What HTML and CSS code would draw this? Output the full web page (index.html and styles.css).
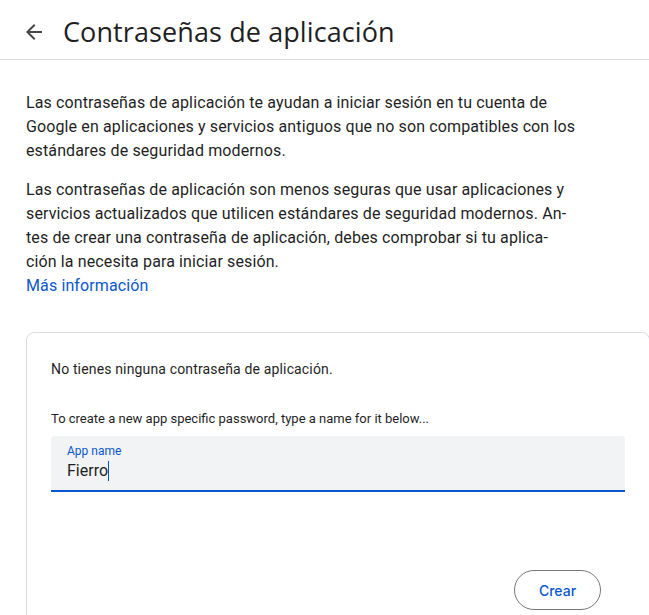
FILE: index.html
```html
<!DOCTYPE html>
<html lang="es">
<head>
<meta charset="utf-8">
<title>Contraseñas de aplicación</title>
<link rel="stylesheet" href="styles.css">
</head>
<body>
<header class="topbar">
  <span class="back" aria-label="Atrás">
    <svg viewBox="0 0 24 24" width="24" height="24"><path d="M20 11H7.83l5.59-5.59L12 4l-8 8 8 8 1.41-1.41L7.83 13H20v-2z" fill="#444746"/></svg>
  </span>
  <h1 class="title">Contraseñas de aplicación</h1>
</header>
<main class="content">
  <p class="para">Las contraseñas de aplicación te ayudan a iniciar sesión en tu cuenta de Google en aplicaciones y servicios antiguos que no son compatibles con los estándares de seguridad modernos.</p>
  <p class="para second">Las contraseñas de aplicación son menos seguras que usar aplicaciones y servicios actualizados que utilicen estándares de seguridad modernos. An&shy;tes de crear una contraseña de aplicación, debes comprobar si tu aplica&shy;ción la necesita para iniciar sesión.<br><a class="link" href="#">Más información</a></p>
</main>
<section class="card">
  <p class="empty">No tienes ninguna contraseña de aplicación.</p>
  <p class="hint">To create a new app specific password, type a name for it below...</p>
  <div class="field">
    <span class="label">App name</span>
    <span class="value">Fierro<span class="caret"></span></span>
  </div>
  <div class="actions">
    <button class="btn">Crear</button>
  </div>
</section>
</body>
</html>
```
FILE: styles.css
```css
html, body {
  margin: 0;
  padding: 0;
  background: #fff;
}
body {
  font-family: Roboto, "Liberation Sans", sans-serif;
  color: #1f1f1f;
  overflow: hidden;
}
.topbar {
  display: flex;
  align-items: center;
  height: 59px;
  border-bottom: 1px solid #dadce0;
  padding-left: 22px;
  gap: 17px;
}
.back {
  display: flex;
  width: 24px;
  height: 24px;
  margin-top: 4px;
}
.title {
  margin: 0;
  font-family: "Open Sans", sans-serif;
  font-weight: 400;
  font-size: 27px;
  color: #1f1f1f;
  letter-spacing: 0.1px;
  margin-top: 4px;
}
.content {
  padding: 31px 26px 0 26px;
  width: 554px;
}
.para {
  margin: 0;
  font-size: 16px;
  line-height: 24px;
  letter-spacing: 0.12px;
  color: #1f1f1f;
}
.second {
  margin-top: 15px;
  max-width: 546px;
}
.link {
  color: #0b57d0;
  text-decoration: none;
}
.card {
  margin: 34px 0 0 26px;
  width: 574px;
  border: 1px solid #dadce0;
  border-radius: 8px;
  padding: 24px 24px 40px 24px;
}
.empty {
  margin: 0;
  font-size: 14px;
  line-height: 24px;
  letter-spacing: 0.15px;
}
.hint {
  margin: 28px 0 7px 0;
  font-size: 13px;
  line-height: 20px;
}
.field {
  display: flex;
  flex-direction: column;
  height: 54px;
  background: #f1f3f4;
  border-radius: 4px 4px 0 0;
  border-bottom: 2px solid #0b57d0;
  padding-left: 16px;
  box-sizing: content-box;
}
.label {
  margin-top: 8px;
  font-size: 12px;
  line-height: 14px;
  color: #0b57d0;
}
.value {
  display: flex;
  align-items: center;
  font-size: 16px;
  line-height: 24px;
  color: #1f1f1f;
  margin-top: 1px;
}
.caret {
  display: inline-block;
  width: 0;
  height: 20px;
  border-left: 1px solid #0b57d0;
}
.actions {
  display: flex;
  justify-content: flex-end;
  padding-right: 24px;
  margin-top: 78px;
}
.btn {
  width: 87px;
  height: 40px;
  border: 1px solid #747775;
  border-radius: 20px;
  background: #fff;
  color: #0b57d0;
  font-family: Inter, "Open Sans", sans-serif;
  font-size: 14px;
  font-weight: 500;
  cursor: pointer;
}
```
